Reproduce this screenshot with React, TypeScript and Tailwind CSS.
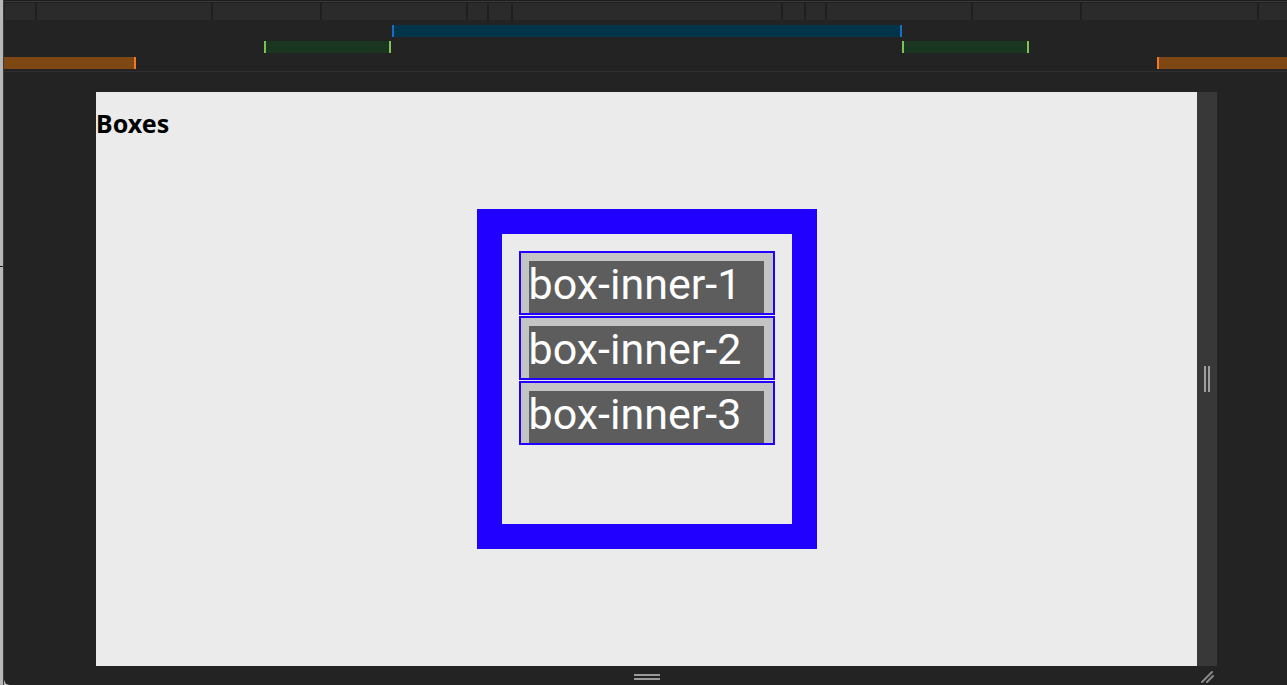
import React from "react";

// tab widths across the top strip (px), separated by 2px gaps
const tabs = [30, 174, 107, 144, 19, 22, 268, 21, 19, 144, 107, 175, 40];

type Clip = { left: number; width: number; fill: string; mark: string; marks: ("l" | "r")[] };

const tracks: Clip[][] = [
  [{ left: 388, width: 510, fill: "bg-[#03354a]", mark: "bg-[#1b6dc2]", marks: ["l", "r"] }],
  [
    { left: 260, width: 127, fill: "bg-[#1a3520]", mark: "bg-[#7cc456]", marks: ["l", "r"] },
    { left: 898, width: 127, fill: "bg-[#1a3520]", mark: "bg-[#7cc456]", marks: ["l", "r"] },
  ],
  [
    { left: 0, width: 132, fill: "bg-[#7e4714]", mark: "bg-[#f07a22]", marks: ["r"] },
    { left: 1153, width: 140, fill: "bg-[#7e4714]", mark: "bg-[#f07a22]", marks: ["l"] },
  ],
];

function Track({ clips }: { clips: Clip[] }) {
  return (
    <div className="relative h-[12px]">
      {clips.map((c) => (
        <div
          key={c.left}
          className={`absolute top-0 h-full ${c.fill}`}
          style={{ left: c.left, width: c.width }}
        >
          {c.marks.includes("l") && <div className={`absolute left-0 top-0 h-full w-[2px] ${c.mark}`} />}
          {c.marks.includes("r") && <div className={`absolute right-0 top-0 h-full w-[2px] ${c.mark}`} />}
        </div>
      ))}
    </div>
  );
}

function InnerBox({ label }: { label: string }) {
  return (
    <div className="flex h-[64px] flex-col overflow-hidden border-[2.5px] border-[#2200ff] bg-[#c4c4c4] pl-2 pr-[9px] pt-2">
      <div className="flex-1 overflow-hidden bg-[#5d5d5d]">
        <span className="block whitespace-nowrap font-['Roboto',sans-serif] text-[43px] leading-[46px] text-white">
          {label}
        </span>
      </div>
    </div>
  );
}

export default function App() {
  return (
    <div className="flex h-[685px] w-[1287px] overflow-hidden bg-[#b8b8b8] font-['Noto_Sans',sans-serif]">
      {/* sliver of the window behind */}
      <div className="flex w-[3px] flex-col">
        <div className="h-[266px]" />
        <div className="h-px bg-[#1a1a1a]" />
      </div>
      <div className="w-px bg-[#3a3a3a]" />

      <div className="flex min-w-0 flex-1 flex-col overflow-hidden rounded-bl-[6px] bg-[#232323]">
        {/* top strip */}
        <div className="h-px bg-[#1c1c1c]" />
        <div className="h-px bg-[#3a3a3a]" />
        <div className="h-[1px] bg-[#1f1f1f]" />
        <div className="flex h-[17px] gap-[2px] bg-[#1f1f1f] pl-px">
          {tabs.map((w, i) => (
            <div key={i} className="h-full shrink-0 bg-[#2b2b2b]" style={{ width: w }} />
          ))}
        </div>

        {/* timeline tracks */}
        <div className="flex flex-col gap-[4px] pb-[2px] pt-[5px]">
          {tracks.map((t, i) => (
            <Track key={i} clips={t} />
          ))}
        </div>
        <div className="h-px bg-[#2f2f2f]" />

        {/* preview area */}
        <div className="ml-[92px] mt-[20px] flex">
          <div className="grid h-[574px] w-[1101px] bg-[#ebebeb] [grid-template-areas:'a']">
            <h2 className="mt-[15px] self-start justify-self-start text-[25px] font-bold leading-[33px] text-black [grid-area:a]">
              Boxes
            </h2>
            <div className="flex h-[340px] w-[340px] flex-col gap-px self-center justify-self-center border-[25px] border-[#2200ff] bg-[#ebebeb] p-[17px] [grid-area:a]">
              <InnerBox label="box-inner-1" />
              <InnerBox label="box-inner-2" />
              <InnerBox label="box-inner-3" />
            </div>
          </div>
          <div className="flex h-[574px] w-[20px] items-center justify-center gap-[2px] bg-[#383838]">
            <div className="h-[26px] w-[2px] bg-[#9e9e9e]" />
            <div className="h-[26px] w-[2px] bg-[#9e9e9e]" />
          </div>
        </div>

        {/* bottom resize bar */}
        <div className="ml-[92px] flex h-[19px]">
          <div className="flex w-[1101px] flex-col items-center gap-[2px] pt-[8px]">
            <div className="h-[2px] w-[26px] bg-[#9a9a9a]" />
            <div className="h-[2px] w-[26px] bg-[#9a9a9a]" />
          </div>
          <div className="flex w-[20px] items-start justify-center pt-[4px]">
            <svg width="13" height="13" viewBox="0 0 13 13">
              <path d="M1 12 L11 2 M6 12 L12 6" stroke="#8a8a8a" strokeWidth="2" strokeLinecap="round" />
            </svg>
          </div>
        </div>
      </div>
    </div>
  );
}
